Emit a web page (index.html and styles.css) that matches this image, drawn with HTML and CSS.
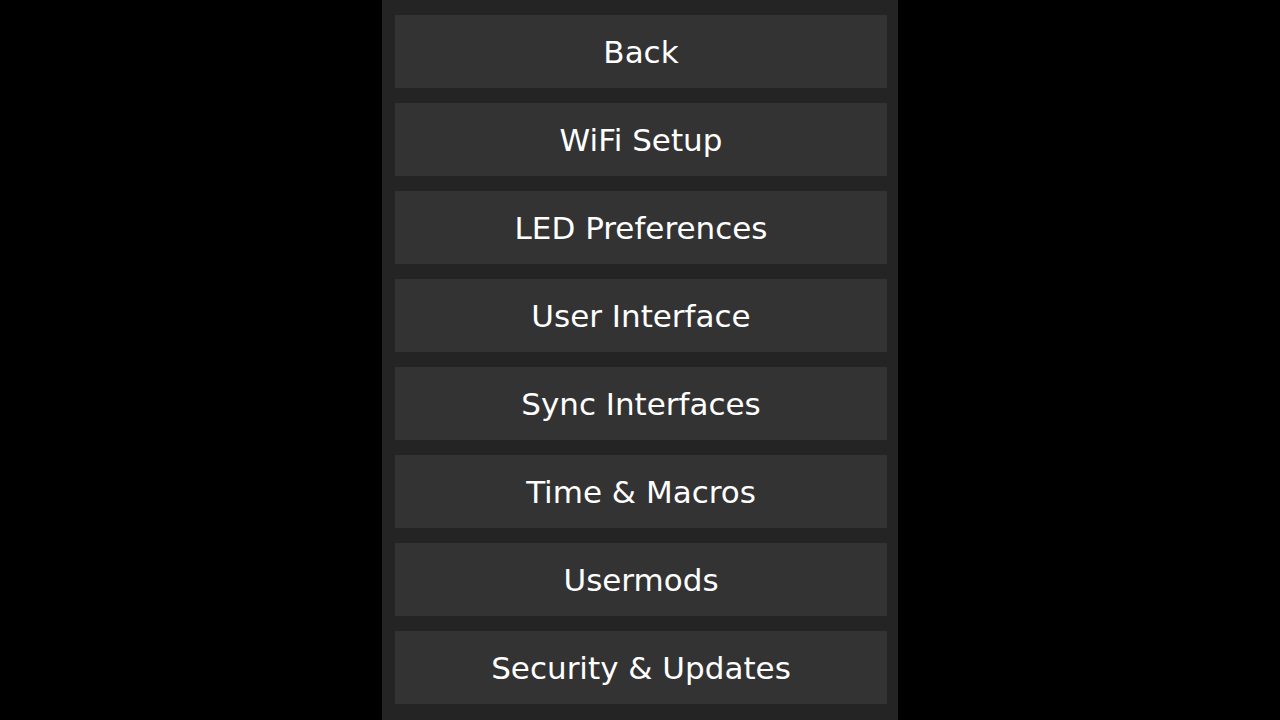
FILE: index.html
```html
<!DOCTYPE html>
<html>
<head>
<meta charset="utf-8">
<link rel="stylesheet" href="styles.css">
</head>
<body>
<div class="panel">
  <button class="btn">Back</button>
  <button class="btn">WiFi Setup</button>
  <button class="btn">LED Preferences</button>
  <button class="btn">User Interface</button>
  <button class="btn">Sync Interfaces</button>
  <button class="btn">Time &amp; Macros</button>
  <button class="btn">Usermods</button>
  <button class="btn">Security &amp; Updates</button>
</div>
</body>
</html>
```
FILE: styles.css
```css
html, body {
  margin: 0;
  padding: 0;
  background: #000;
  height: 100%;
  overflow: hidden;
}
.panel {
  width: 516px;
  margin: 0 auto;
  height: 100%;
  background: #242424;
  box-sizing: border-box;
  padding: 15px 11px 0 13px;
  display: flex;
  flex-direction: column;
  gap: 15px;
}
.btn {
  flex: 0 0 73px;
  height: 73px;
  width: 100%;
  background: #333;
  color: #fff;
  border: 0;
  margin: 0;
  padding: 0;
  font-family: "DejaVu Sans", Verdana, sans-serif;
  font-size: 31px;
  text-align: center;
}
```
